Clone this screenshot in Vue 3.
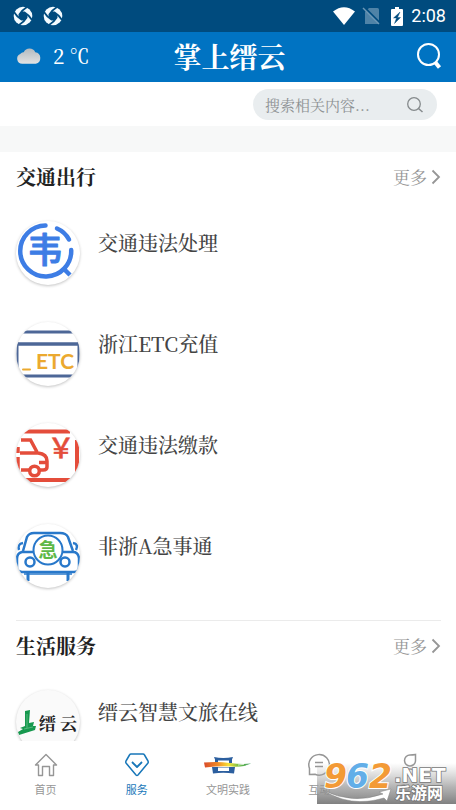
<script setup>
import { ref } from 'vue'

const keyword = ref('')
const active = ref('service')

const sections = [
  {
    title: '交通出行',
    items: [
      { icon: 'violation', name: '交通违法处理' },
      { icon: 'etc', name: '浙江ETC充值' },
      { icon: 'payment', name: '交通违法缴款' },
      { icon: 'urgent', name: '非浙A急事通' }
    ]
  },
  {
    title: '生活服务',
    items: [{ icon: 'travel', name: '缙云智慧文旅在线' }]
  }
]

const tabs = [
  { id: 'home', label: '首页' },
  { id: 'service', label: '服务' },
  { id: 'practice', label: '文明实践' },
  { id: 'chat', label: '互动' },
  { id: 'mine', label: '我的' }
]
</script>

<template>
  <div class="page">
    <div class="status">
      <div class="status-side">
        <svg v-for="n in 2" :key="n" class="swirl" viewBox="0 0 20 20" aria-hidden="true">
          <circle cx="10" cy="10" r="9.3" fill="#f4fbff" />
          <path d="M10 5 15 10 10 15 5 10Z" fill="#004b7e" />
          <path d="M6 9Q9 4 14 1M11 6Q16 9 19 14M14 11Q11 16 6 19M9 14Q4 11 1 6" stroke="#004b7e" stroke-width="1.8" fill="none" />
        </svg>
      </div>
      <div class="status-side right">
        <svg class="wifi" viewBox="0 0 22 18" aria-hidden="true"><path d="M0 4.500Q11-4 22 4.500L11 18Z" fill="#fff" /></svg>
        <svg class="sim" viewBox="0 0 18 18" aria-hidden="true">
          <path d="M6 1H14.500Q16 1 16 2.500V17H2V5Z" fill="#4f83a7" />
          <path d="M1 0 17 16" stroke="#004b7e" stroke-width="2" />
          <path d="M0 1 16 17" stroke="#6d98b6" stroke-width="1.500" />
        </svg>
        <svg class="battery" viewBox="0 0 12 19" aria-hidden="true">
          <path d="M4 0H8V2H11Q12 2 12 3V18Q12 19 11 19H1Q0 19 0 18V3Q0 2 1 2H4Z" fill="#fff" />
          <path d="M9 5 2.500 11H5.500L3.500 16.500 9.500 10.500H6.500Z" fill="#004b7e" stroke="#004b7e" stroke-width=".4" />
        </svg>
        <span class="clock">2:08</span>
      </div>
    </div>

    <header class="header">
      <div class="weather">
        <svg class="cloud" viewBox="0 0 23 17" aria-hidden="true">
          <defs>
            <linearGradient id="cloudFill" x1="0" y1="0" x2="0" y2="1">
              <stop offset="0" stop-color="#b4babf" /><stop offset="1" stop-color="#e3e3e3" />
            </linearGradient>
          </defs>
          <path d="M5 16A5 5 0 0 1 3 6.500Q5 4.500 6.500 5A6 6 0 0 1 17.500 5 5.600 5.600 0 0 1 18 16Z" fill="url(#cloudFill)" />
        </svg>
        <span>2 ℃</span>
      </div>
      <h1>掌上缙云</h1>
      <button class="search-open" type="button" aria-label="搜索">
        <svg viewBox="0 0 26 28" aria-hidden="true">
          <circle cx="12.500" cy="12.500" r="10.500" fill="none" stroke="#fff" stroke-width="2" />
          <path d="M19 20 23.500 25.500" stroke="#fff" stroke-width="4" />
        </svg>
      </button>
    </header>

    <form class="search-row" role="search" @submit.prevent>
      <div class="pill">
        <input v-model="keyword" type="text" placeholder="搜索相关内容..." aria-label="搜索相关内容" />
        <button type="submit" aria-label="提交搜索">
          <svg viewBox="0 0 18 18" aria-hidden="true">
            <circle cx="8" cy="8" r="6.300" fill="none" stroke="#858a8c" stroke-width="1.300" />
            <path d="M12.500 12.500 16.500 16" stroke="#858a8c" stroke-width="1.500" />
          </svg>
        </button>
      </div>
    </form>

    <main class="content">
      <section v-for="section in sections" :key="section.title" class="section">
        <div class="section-head">
          <h2>{{ section.title }}</h2>
          <a class="more" href="#">更多
            <svg viewBox="0 0 10 16" aria-hidden="true"><path d="M1.500 1.500 8 8 1.500 14.500" fill="none" stroke="#969696" stroke-width="1.800" /></svg>
          </a>
        </div>
        <ul>
          <li v-for="item in section.items" :key="item.name">
            <a class="item" href="#">
              <span class="badge" :class="item.icon">
                <svg v-if="item.icon === 'violation'" viewBox="0 0 64 64" aria-hidden="true">
                  <g fill="none" stroke="#3d7de5" stroke-width="4.500" stroke-linecap="round">
                    <path d="M29.500 4.500A25.500 25.500 0 1 0 55.200 29" />
                    <path d="M41 7.500Q49 11 53 18.500" />
                    <path d="M48.500 48.500 54 54" stroke-linecap="butt" />
                  </g>
                  <text x="29" y="42" text-anchor="middle" font-size="35" font-weight="500" fill="#3d7de5" stroke="#3d7de5" stroke-width="1" stroke-linejoin="round">韦</text>
                </svg>
                <svg v-else-if="item.icon === 'etc'" viewBox="0 0 64 64" aria-hidden="true">
                  <path d="M0 10H64M0 54H64" stroke="#4d6797" stroke-width="3" />
                  <path d="M0 22H64" stroke="#4d6797" stroke-width="3.500" />
                  <path d="M1.500 20V56M62.500 20V56" stroke="#4d6797" stroke-width="2" />
                  <path d="M7 47.500H14" stroke="#eba92f" stroke-width="2" stroke-linecap="round" />
                  <text class="latin" x="20" y="47" font-size="21" font-weight="700" fill="#eba92f">ETC</text>
                </svg>
                <svg v-else-if="item.icon === 'payment'" viewBox="0 0 64 64" aria-hidden="true">
                  <g fill="none" stroke="#e44d3b" stroke-width="3.500">
                    <path d="M0 8.500H54M0 57H54" stroke-width="4" />
                    <path d="M61 17V52" stroke-width="4" /><path d="M2 24V30M2 34V50" />
                    <path d="M5 17H14.500L21 29M4 30H22Q31 31 31 38V44Q31 47 27 47H24M23 39.500H31M5 47H13" />
                    <circle cx="18.500" cy="48" r="4.800" />
                  </g>
                  <text x="45" y="35" text-anchor="middle" font-size="27" font-weight="500" fill="#e44d3b" stroke="#e44d3b" stroke-width=".5">￥</text>
                </svg>
                <svg v-else-if="item.icon === 'urgent'" viewBox="0 0 64 64" aria-hidden="true">
                  <g fill="none" stroke="#2878ca" stroke-width="2.500">
                    <path d="M7 27 11 13Q13 9 18 9H44Q50 9 52 13L57 27" />
                    <path d="M7 19Q1 20 3 26M57 19Q63 20 60 26" />
                    <path d="M20 28H6Q1 29 1 35V45Q2 48 6 48H58Q63 48 63 43V34Q62 28 57 28H44" />
                    <path d="M12 49V57M52 49V57" stroke-width="3" />
                    <path d="M8 50H56" stroke-width="1.500" />
                    <circle cx="32" cy="26" r="14.500" fill="#fff" stroke-width="2" />
                    <circle cx="14" cy="38" r="4.500" fill="#fff" /><circle cx="49" cy="38" r="4.500" fill="#fff" />
                  </g>
                  <text x="32" y="33" text-anchor="middle" font-size="19" font-weight="700" fill="#5eb847">急</text>
                </svg>
                <svg v-else viewBox="0 0 64 64" aria-hidden="true">
                  <path d="M9 21 14 20 13 33 18 32 17 36 20 36 19 40 3 45 2 42 7 39 4 38 9 36Z" fill="#16984e" />
                  <path d="M8 39 17 37M11 24V38" stroke="#54b87d" stroke-width="1" />
                  <text class="brush" x="23" y="40" font-size="17" font-weight="700" fill="#222">缙<tspan x="44">云</tspan></text>
                </svg>
              </span>
              <span class="name">{{ item.name }}</span>
            </a>
          </li>
        </ul>
      </section>
    </main>

    <nav class="tabs">
      <a v-for="tab in tabs" :key="tab.id" href="#" class="tab" :class="{ active: tab.id === active }" @click.prevent="active = tab.id">
        <svg v-if="tab.id === 'home'" class="tab-icon" viewBox="0 0 24 24" aria-hidden="true">
          <path d="M1.500 12 12 1.500 22.500 12H19.500V22.500H15.500V13.500H8.500V22.500H4.500V12Z" fill="none" stroke="#969696" stroke-width="1.400" stroke-linejoin="round" />
        </svg>
        <svg v-else-if="tab.id === 'service'" class="tab-icon" viewBox="0 0 24 24" aria-hidden="true">
          <g fill="none" stroke="#1877b9" stroke-width="1.500" stroke-linejoin="round">
            <path d="M6 1H18Q19 1 19.500 2L23 8Q23.500 9 23 10L13 22Q12 23 11 22L1 10Q.5 9 1 8L4.500 2Q5 1 6 1Z" /><path d="M7 9 12 14 17 9" stroke-width="1.800" />
          </g>
        </svg>
        <svg v-else-if="tab.id === 'practice'" class="tab-icon wide" viewBox="0 0 48 24" aria-hidden="true">
          <defs>
            <linearGradient id="rainbow">
              <stop offset="0" stop-color="#d94b2b" /><stop offset=".3" stop-color="#f28b25" /><stop offset=".52" stop-color="#f7e037" /><stop offset=".75" stop-color="#6cbc45" /><stop offset="1" stop-color="#3d9b65" />
            </linearGradient>
          </defs>
          <path d="M10 4Q19 6 29 4L28 6.500V10H25V7.500H14V10H11V6.500Z" fill="#2c5f9f" />
          <path d="M8 14H31L30 20.500Q19 19 9 20.500ZM14 14.500V18H25V14.500Z" fill="#2c5f9f" fill-rule="evenodd" />
          <path d="M0 9.500Q14 8.500 26 10T47 10.500Q39 14.500 28 13.500T1 14.500Z" fill="url(#rainbow)" />
          <path d="M34 12 40 11.300M42 12.500 47 11.500" stroke="#fff" stroke-width=".7" />
        </svg>
        <svg v-else-if="tab.id === 'chat'" class="tab-icon" viewBox="0 0 24 24" aria-hidden="true">
          <g fill="none" stroke="#969696" stroke-width="1.500"><path d="M2.500 21.500V15.500A10.300 10.300 0 1 1 8 21.300Z" /><path d="M8 9.500H16M8 13.500H16" /></g>
        </svg>
        <svg v-else class="tab-icon" viewBox="0 0 24 24" aria-hidden="true">
          <g fill="none" stroke="#969696" stroke-width="1.500"><path d="M17.500 1.500V8A5.500 5.500 0 1 1 12 2Q15 2 17.500 1.500Z" /><path d="M6 20.500Q8 16 12 16T18 20.500" /></g>
        </svg>
        <span>{{ tab.label }}</span>
      </a>
    </nav>

    <div class="watermark">
      <svg viewBox="0 0 139 47" role="img" aria-label="962.NET 乐游网">
        <defs>
          <linearGradient id="shade" x1="0" y1="0" x2="0" y2="1">
            <stop offset="0" stop-color="#a8a8a8" stop-opacity="0" /><stop offset=".6" stop-color="#989898" stop-opacity=".75" /><stop offset="1" stop-color="#808080" />
          </linearGradient>
        </defs>
        <rect width="139" height="41" y="0" fill="url(#shade)" />
        <path d="M6 27Q35 42 66 31L62 29 74 26 70 38 67 35Q33 45 6 27Z" fill="#fff" stroke="#808080" stroke-width=".5" />
        <g class="wm-number" font-size="33" stroke="#fff" stroke-width="2" paint-order="stroke">
          <text x="7" y="25" fill="#f39a36">9</text><text x="29" y="25" fill="#62aee8">6</text><text x="52" y="25" fill="#f39a36">2</text>
        </g>
        <text class="wm-net" x="77" y="19" font-size="20" fill="#fff" stroke="#777" stroke-width="1.500" paint-order="stroke">.NET</text>
        <text class="wm-site" x="78" y="36" font-size="16" fill="#fff" stroke="#777" stroke-width="1.500" paint-order="stroke">乐游网</text>
      </svg>
    </div>
  </div>
</template>

<style>
body { margin: 0; background: #fff; }
</style>

<style scoped>
.page {
  position: relative;
  display: flex;
  flex-direction: column;
  height: 100vh;
  overflow: hidden;
  background: #fff;
  color: #444;
  font-family: "Noto Serif CJK SC", "Noto Serif SC", "Source Han Serif SC", "Liberation Serif", "Noto Sans CJK SC", serif;
}
a { color: inherit; text-decoration: none; }
button { padding: 0; border: 0; background: none; cursor: pointer; }
svg { display: block; overflow: visible; }
h1, h2, ul { margin: 0; padding: 0; }
ul { list-style: none; }

.status {
  display: flex;
  flex: none;
  align-items: center;
  justify-content: space-between;
  height: 32px;
  padding: 0 10px 0 13px;
  background: #004b7e;
}
.status-side { display: flex; align-items: center; gap: 10px; }
.right { gap: 8px; }
.swirl { width: 20px; height: 20px; }
.wifi { width: 22px; height: 18px; }
.sim { width: 18px; height: 18px; }
.battery { width: 12px; height: 19px; margin: 0 0 0 2px; }
.clock { color: #fff; font: 400 18px/32px Roboto, sans-serif; }

.header {
  display: grid;
  flex: none;
  grid-template-columns: 1fr auto 1fr;
  align-items: center;
  box-sizing: border-box;
  height: 50px;
  padding: 0 14px 3px 17px;
  background: #0073c2;
  color: #fff;
}
.weather { display: flex; align-items: center; gap: 12px; font-size: 20px; line-height: 28px; font-weight: 500; }
.cloud { width: 24px; height: 18px; }
h1 { font-size: 28px; line-height: 46px; font-weight: 700; }
.search-open { justify-self: end; }
.search-open svg { width: 26px; height: 28px; }

.search-row { display: flex; flex: none; justify-content: flex-end; padding: 7px 19px 6px; }
.pill {
  display: flex;
  align-items: center;
  box-sizing: border-box;
  width: 44%;
  height: 31px;
  padding: 0 13px 0 12px;
  border-radius: 16px;
  background: #e9edef;
}
.pill input {
  flex: 1;
  min-width: 0;
  padding: 0;
  border: 0;
  outline: 0;
  background: transparent;
  color: #555;
  font: 15px/24px "Noto Serif CJK SC", "Liberation Serif", "Noto Sans CJK SC", serif;
}
.pill input::placeholder { color: #8d9193; opacity: 1; }
.pill svg { width: 18px; height: 18px; }

.content { flex: 1; min-height: 0; overflow: hidden; border-top: 26px solid #f7f8f8; }
.section { margin: 0 15px 0 16px; padding-bottom: 14px; }
.section + .section { border-top: 1px solid #ebebeb; }
.section-head { display: flex; align-items: center; justify-content: space-between; height: 50px; }
h2 { color: #222; font-size: 20px; line-height: 28px; font-weight: 700; }
.more { display: flex; align-items: center; gap: 4px; color: #969696; font-size: 17px; line-height: 28px; }
.more svg { width: 10px; height: 16px; }
.item { display: flex; align-items: flex-start; gap: 18px; padding: 19px 0 18px; }
.badge {
  width: 64px;
  height: 64px;
  overflow: hidden;
  border-radius: 50%;
  background: #fff;
  box-shadow: 0 1px 3px rgba(0, 0, 0, 0.24);
}
.badge svg { width: 64px; height: 64px; font-family: "Noto Sans CJK SC", sans-serif; }
.badge.travel { background: #fafafa; }
.badge .latin { font-family: Lato, sans-serif; }
.badge .brush { font-family: "Noto Serif CJK SC", "Noto Sans CJK SC", serif; }
.name { font-size: 20px; line-height: 44px; font-weight: 500; }

.tabs {
  display: grid;
  flex: none;
  grid-template-columns: repeat(5, 1fr);
  height: 69px;
  background: #fff;
  color: #969696;
  font: 11px/16px "Noto Sans CJK SC", sans-serif;
}
.tab { display: flex; flex-direction: column; align-items: center; gap: 4px; padding-top: 12px; }
.tab.active { color: #1877b9; }
.tab-icon { width: 24px; height: 24px; }
.tab-icon.wide { width: 48px; }

.watermark { position: absolute; right: 0; bottom: 0; width: 139px; }
.wm-number { font-family: "DejaVu Sans", sans-serif; font-weight: 700; font-style: italic; }
.wm-net { font-family: "DejaVu Sans", sans-serif; font-weight: 700; }
.wm-site { font-family: "Noto Sans CJK SC", sans-serif; font-weight: 700; }
</style>
